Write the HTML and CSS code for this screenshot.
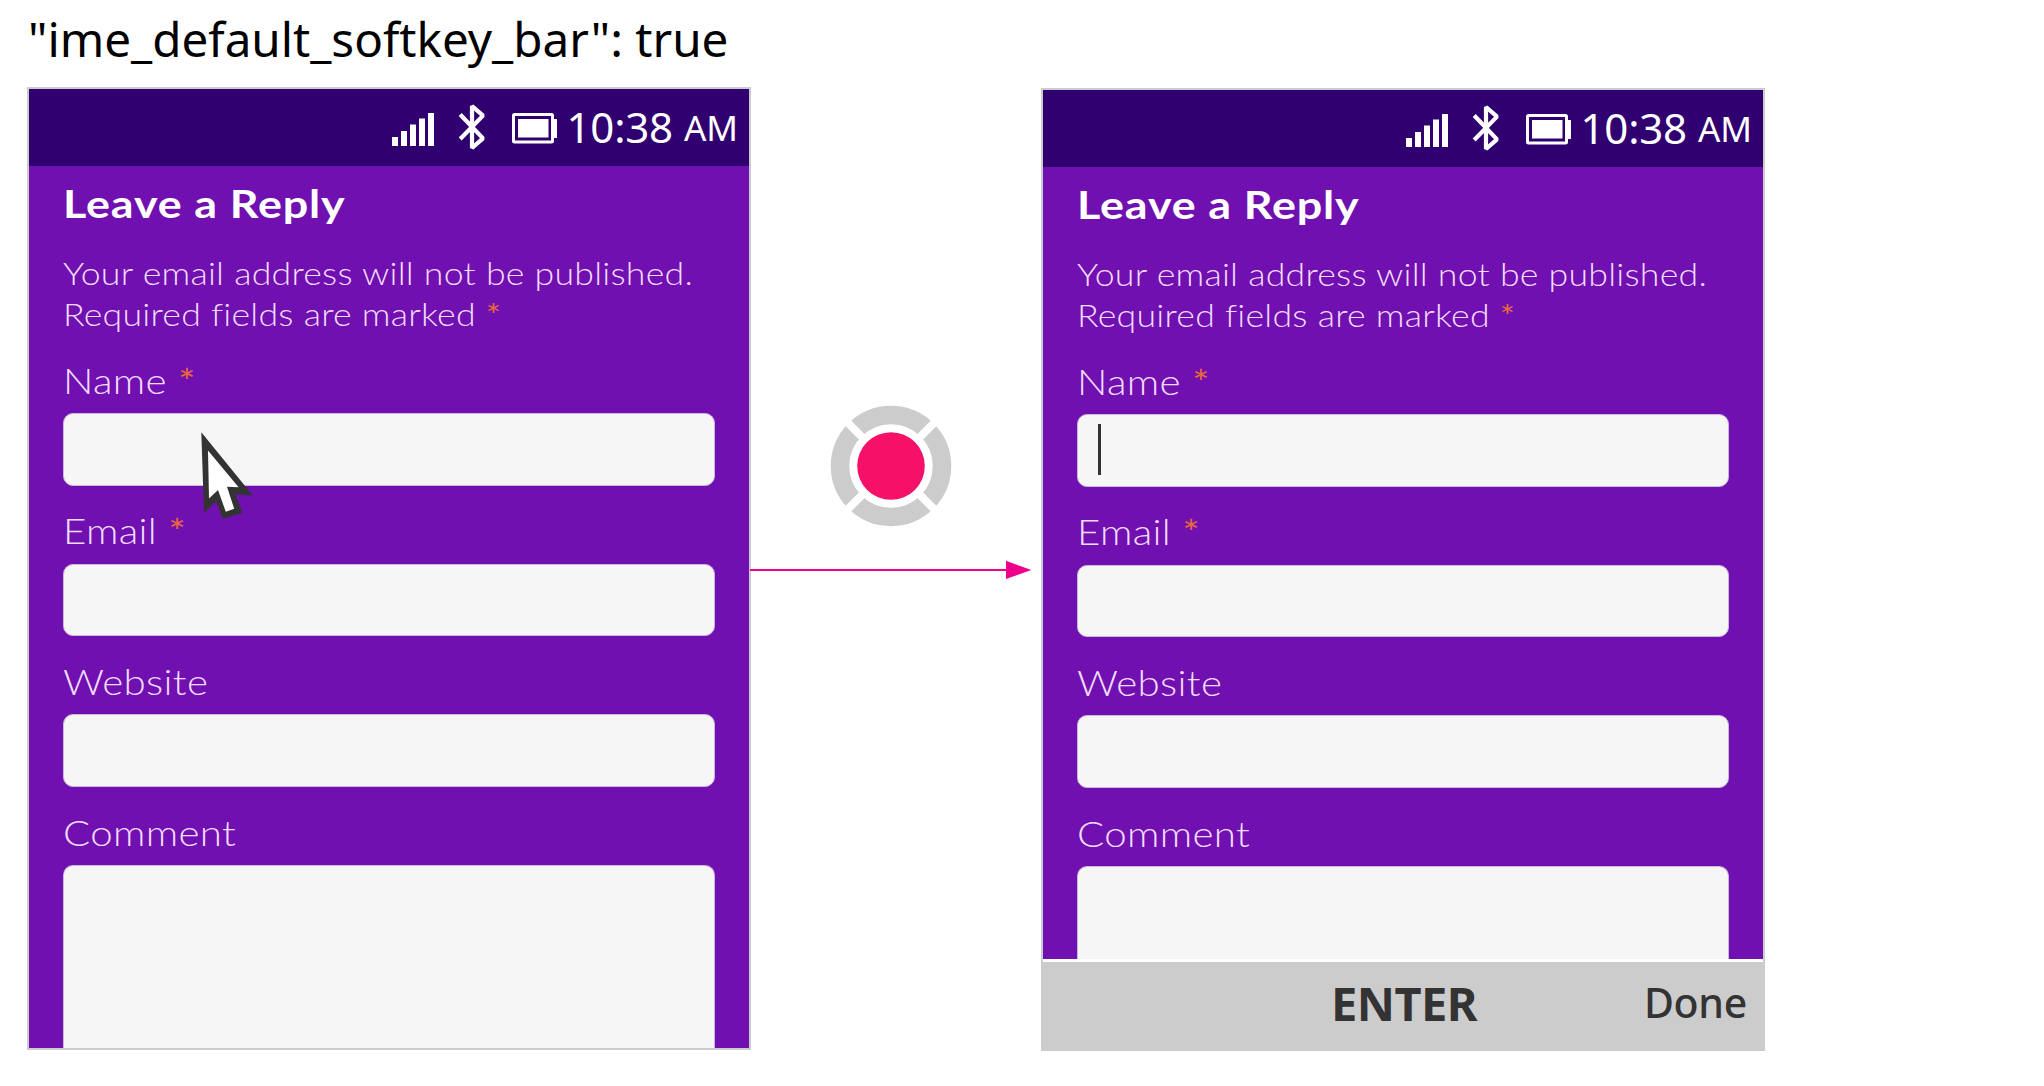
FILE: index.html
```html
<!DOCTYPE html>
<html lang="en">
<head>
<meta charset="utf-8">
<title>Softkey bar</title>
<link rel="stylesheet" href="styles.css">
</head>
<body>
<svg class="defs" width="0" height="0" aria-hidden="true">
  <symbol id="signal" viewBox="0 0 42 33">
    <path fill="#fff" d="M0 24h6v9H0zM9 18h6v15H9zM18 11.6h6V33h-6zM27 5.6h6V33h-6zM36 0h6v33h-6z"/>
  </symbol>
  <symbol id="bluetooth" viewBox="0 0 28 50">
    <path fill="none" stroke="#fff" stroke-width="4.2" stroke-linejoin="bevel" d="M2.2 12.5 25 36.4 14 46V4L25 13.6 2.2 37"/>
  </symbol>
  <symbol id="battery" viewBox="0 0 46 31">
    <rect x="1.5" y="1.5" width="39" height="27.5" rx="1" fill="none" stroke="#fff" stroke-width="3"/>
    <path fill="#fff" d="M6 6h30.500v18.500H6zM42 6h3v19h-3z"/>
  </symbol>
</svg>

<h1 class="caption">"ime_default_softkey_bar": true</h1>

<main class="flow">
  <section class="phone">
    <div class="status">
      <svg class="signal"><use href="#signal"/></svg>
      <svg class="bluetooth"><use href="#bluetooth"/></svg>
      <svg class="battery"><use href="#battery"/></svg>
      <span class="clock">10:38</span><span class="ampm">AM</span>
    </div>
    <div class="form">
      <h2><span class="wide">Leave a Reply</span></h2>
      <p><span class="wide">Your email address will not be published.<br>Required fields are marked <i>*</i></span></p>
      <div class="field"><label><span class="wide">Name <i>*</i></span></label><div class="input">
        <svg class="pointer" viewBox="0 0 52 88">
          <path fill="#333" d="M.3.3 51.800 63.600 34.500 62.300 41.500 80.700 21.600 87 15.500 69.500 3 80.500z"/>
          <path fill="#fff" d="M7 18.500 37.600 55.200 26 54.800 33.200 76.800 24.800 79.800 17 58 8 66.500z"/>
        </svg>
      </div></div>
      <div class="field"><label><span class="wide">Email <i>*</i></span></label><div class="input"></div></div>
      <div class="field"><label><span class="wide">Website</span></label><div class="input"></div></div>
      <div class="field grow"><label><span class="wide">Comment</span></label><div class="input area"></div></div>
    </div>
  </section>

  <div class="link">
    <svg class="dpad" viewBox="-61 -61 122 122">
      <circle r="51" fill="none" stroke="#ccc" stroke-width="18.500"/>
      <path d="M-50-50 50 50M50-50-50 50" stroke="#fff" stroke-width="8"/>
      <circle r="33.800" fill="#f51068"/>
    </svg>
    <svg class="arrow" viewBox="0 0 282 20">
      <path d="M0 10h258" stroke="#ec008c" stroke-width="2"/>
      <path d="M256 .8 281.300 10 256 19z" fill="#ec008c"/>
    </svg>
  </div>

  <section class="phone second">
    <div class="status">
      <svg class="signal"><use href="#signal"/></svg>
      <svg class="bluetooth"><use href="#bluetooth"/></svg>
      <svg class="battery"><use href="#battery"/></svg>
      <span class="clock">10:38</span><span class="ampm">AM</span>
    </div>
    <div class="form">
      <h2><span class="wide">Leave a Reply</span></h2>
      <p><span class="wide">Your email address will not be published.<br>Required fields are marked <i>*</i></span></p>
      <div class="field"><label><span class="wide">Name <i>*</i></span></label><div class="input"><span class="caret"></span></div></div>
      <div class="field"><label><span class="wide">Email <i>*</i></span></label><div class="input"></div></div>
      <div class="field"><label><span class="wide">Website</span></label><div class="input"></div></div>
      <div class="field grow"><label><span class="wide">Comment</span></label><div class="input area"></div></div>
    </div>
    <div class="softkeys"><span></span><b>ENTER</b><span class="done">Done</span></div>
  </section>
</main>
</body>
</html>
```
FILE: styles.css
```css
* { box-sizing: border-box; }
body { margin: 0; background: #fff; font-family: "Noto Sans", sans-serif; overflow: hidden; }
.defs { display: block; }
svg { display: block; overflow: visible; flex: none; }

.caption { margin: 0; height: 87px; padding-left: 28px; font-size: 47.6px; font-weight: 400; line-height: 78px; color: #000; white-space: nowrap; }
.flow { display: flex; align-items: flex-start; padding-left: 27px; }

.phone { display: flex; flex-direction: column; width: 724px; height: 963px; border: 2px solid #ccc; background: #7010b0; overflow: hidden; }
.second { margin-top: 1px; }

.status { display: flex; flex: none; justify-content: flex-end; height: 77px; padding-right: 11px; background: #310070; color: #fff; line-height: 75px; }
.signal { width: 42px; height: 33px; margin: 24px 24px 0 0; }
.bluetooth { width: 28px; height: 50px; margin: 13px 26px 0 0; }
.battery { width: 46px; height: 31px; margin: 24px 9px 0 0; }
.clock { font-size: 42px; font-weight: 400; letter-spacing: -.2px; }
.ampm { margin-left: 11px; font-size: 35px; font-weight: 400; line-height: 78px; }

.form { display: flex; flex: 1; min-height: 0; flex-direction: column; padding: 6.500px 34px 0; font-family: Lato, sans-serif; font-weight: 300; color: #f3dcff; overflow: hidden; }
.wide { display: inline-block; transform: scaleX(1.15); transform-origin: 0 50%; white-space: nowrap; }
h2 { flex: none; margin: 0; height: 60px; line-height: 60px; font-size: 39px; font-weight: 700; letter-spacing: .75px; color: #fff; }
p { flex: none; margin: 20px 0 22px; height: 82px; font-size: 31px; line-height: 41px; letter-spacing: .21px; }
i { font-style: normal; font-weight: 400; color: #e8683c; }
.field { flex: none; height: 150.7px; }
label { display: block; height: 48px; margin-bottom: 8.4px; font-size: 35px; line-height: 47px; letter-spacing: .3px; }
.input { position: relative; height: 72.7px; border: 1px solid #cdb6dc; border-radius: 10px; background: #f6f6f6; }
.field.grow { display: flex; flex: 1; flex-direction: column; min-height: 0; }
.grow label { flex: none; }
.area { flex: 1; border-bottom: 0; border-radius: 10px 10px 0 0; }
.pointer { position: absolute; left: 137px; top: 18px; width: 52px; height: 88px; }
.caret { display: block; width: 3px; height: 51px; margin: 9px 0 0 20px; background: #333; }

.link { width: 290px; padding-top: 317.500px; }
.dpad { width: 122px; height: 122px; margin-left: 78.6px; }
.arrow { width: 282px; height: 20px; margin-top: 33.2px; margin-left: -1px; }

.softkeys { display: grid; flex: none; grid-template-columns: 1fr auto 1fr; height: 90px; padding-right: 16px; border-top: 3px solid #fff; background: #ccc; color: #333; line-height: 81px; }
.softkeys b { font-size: 47px; letter-spacing: -.6px; line-height: 83px; margin-left: 18px; }
.done { font-size: 41px; font-weight: 500; letter-spacing: -.3px; text-align: right; }
```
